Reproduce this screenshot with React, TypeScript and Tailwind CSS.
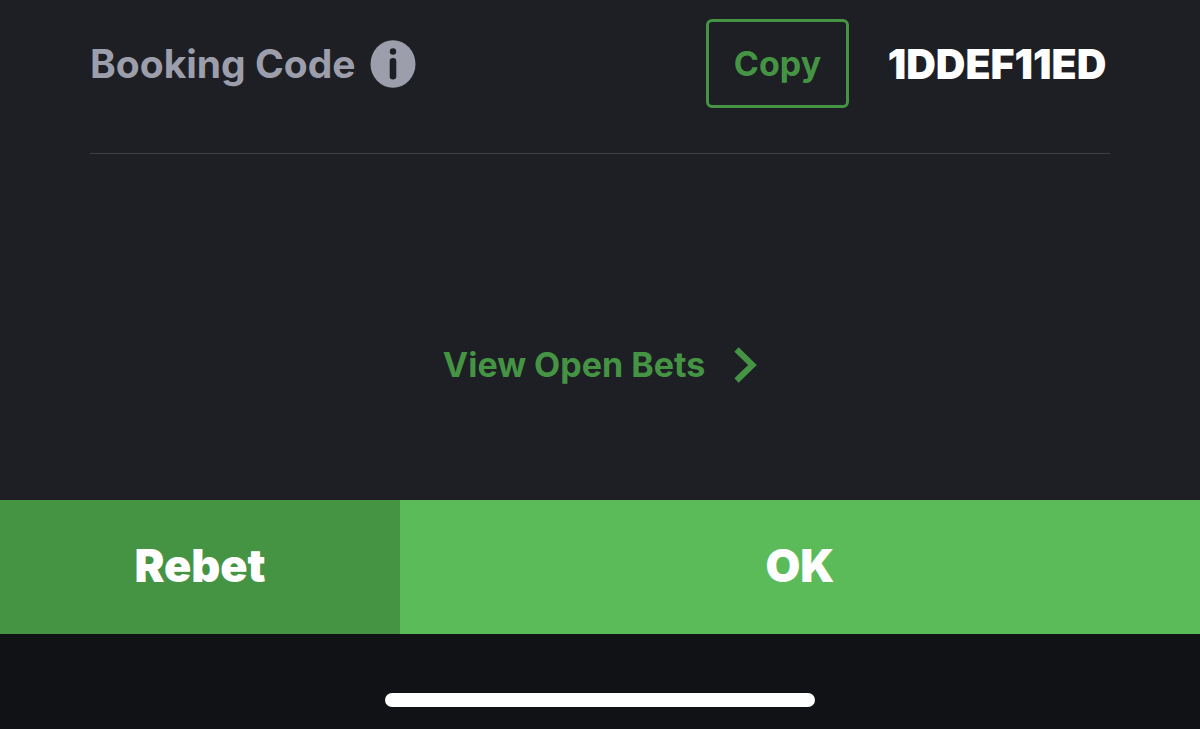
export default function App() {
  return (
    <div className="flex min-h-screen flex-col bg-[#1e1f25] font-['Inter',sans-serif]">
      <main className="flex grow flex-col px-[90px]">
        <section className="flex items-start justify-between border-b border-[#3e3f44] pt-[19px] pb-[45px]">
          <div className="flex h-[89px] items-center gap-[14px]">
            <span className="text-[39px] leading-[48px] font-bold text-[#9c9fab]">Booking Code</span>
            <button type="button" aria-label="About booking code" className="text-[#9c9fab]">
              <svg viewBox="0 0 46 48" className="h-12 w-[46px]" aria-hidden="true">
                <ellipse cx="23" cy="24" rx="22.5" ry="23.8" fill="currentColor" />
                <circle cx="23" cy="11.5" r="3.2" fill="#1e1f25" />
                <rect x="19.7" y="18" width="6.6" height="21.5" rx="3.3" fill="#1e1f25" />
              </svg>
            </button>
          </div>
          <div className="flex items-center gap-[35px]">
            <button type="button" className="h-[89px] w-[143px] rounded-md border-3 border-[#459444] text-[34px] leading-10 font-bold text-[#459444]">
              Copy
            </button>
            <span className="min-w-[226px] text-center text-[41px] leading-[48px] font-black text-white">1DDEF11ED</span>
          </div>
        </section>
        <div className="flex grow items-center justify-center pt-[75px]">
          <a href="#open-bets" className="flex items-center gap-7 text-[34px] leading-10 font-bold text-[#459444]">
            View Open Bets
            <svg viewBox="0 0 24 36" className="h-9 w-6" fill="none" stroke="currentColor" strokeWidth="6" aria-hidden="true">
              <path d="M3.5 2.5l16 15.5L3.5 33.5" />
            </svg>
          </a>
        </div>
      </main>
      <div className="grid h-[134px] grid-cols-3 text-[45px] leading-[52px] font-black text-white">
        <button type="button" className="bg-[#459444] pb-[2px]">Rebet</button>
        <button type="button" className="col-span-2 bg-[#5abb58] pb-[2px]">OK</button>
      </div>
      <footer className="flex h-[95px] items-center justify-center bg-[#111216] pt-9">
        <div className="h-[14px] w-[430px] rounded-full bg-white" />
      </footer>
    </div>
  );
}
